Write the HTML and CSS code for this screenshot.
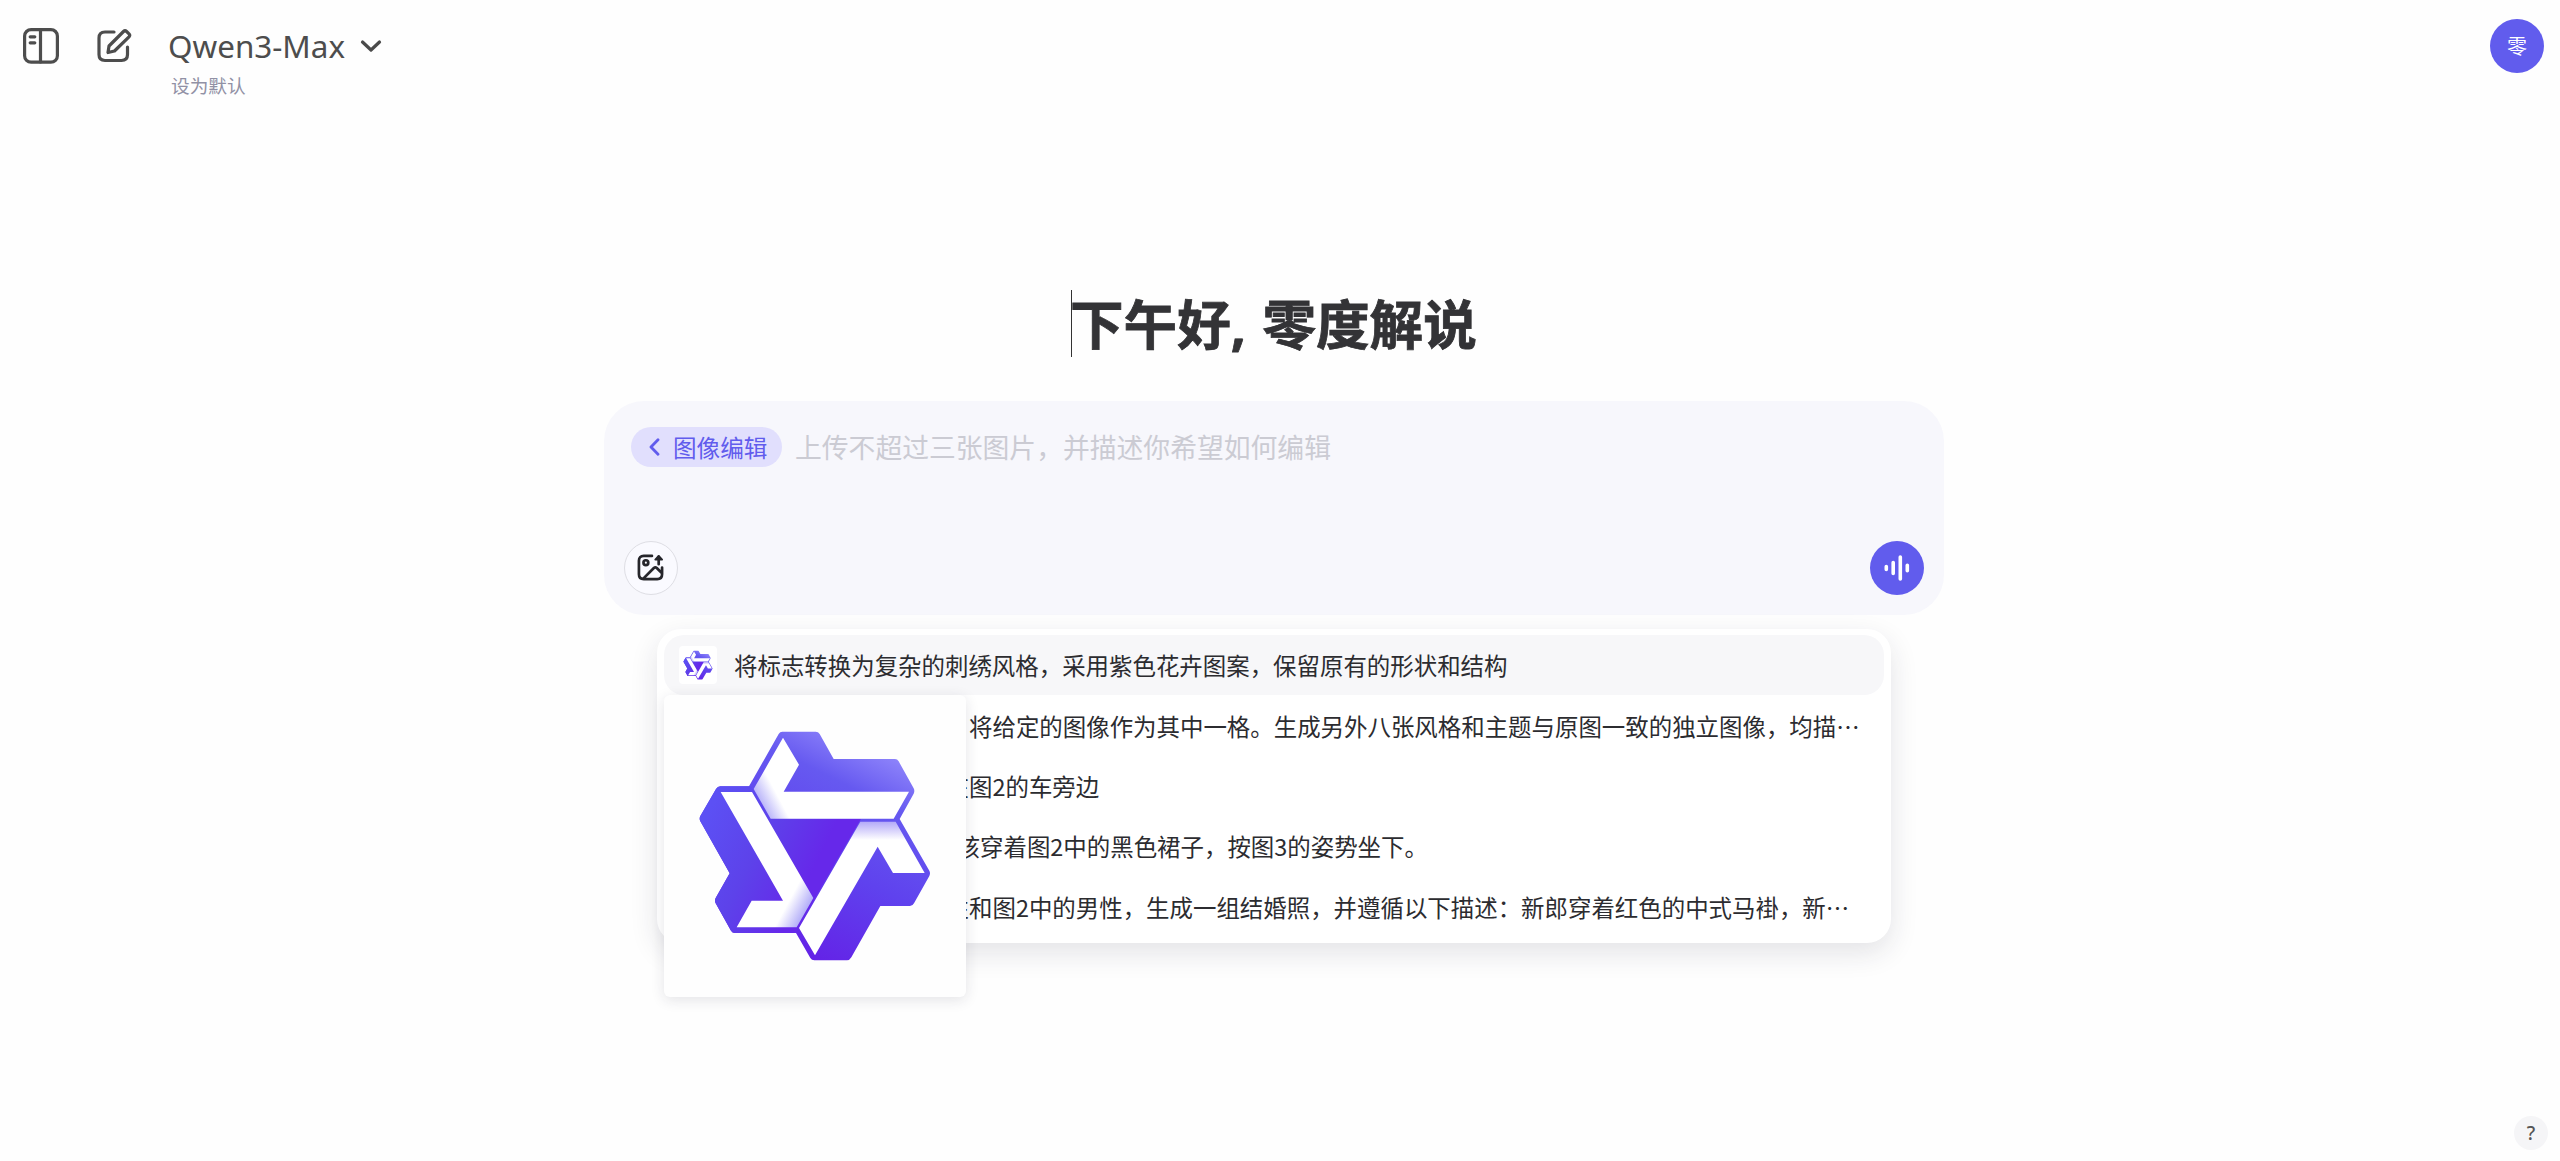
FILE: index.html
```html
<!DOCTYPE html>
<html lang="zh-CN">
<head>
<meta charset="utf-8">
<title>Qwen Chat</title>
<link rel="stylesheet" href="styles.css">
</head>
<body>
<svg class="defs" aria-hidden="true">
  <defs>
    <linearGradient id="base" gradientUnits="userSpaceOnUse" x1="740" y1="210" x2="440" y2="810">
      <stop offset="0" stop-color="#8c82fa"/><stop offset=".2" stop-color="#6659f0"/><stop offset=".55" stop-color="#5f42ee"/><stop offset="1" stop-color="#6420e6"/>
    </linearGradient>
    <linearGradient id="left" gradientUnits="userSpaceOnUse" x1="160" y1="400" x2="480" y2="560">
      <stop offset="0" stop-color="#5c50f4"/><stop offset=".5" stop-color="#5d42ea"/><stop offset="1" stop-color="#6628ea"/>
    </linearGradient>
    <linearGradient id="fadeA" gradientUnits="userSpaceOnUse" x1="325" y1="350" x2="385" y2="318">
      <stop offset="0" stop-color="#a9a3f8"/><stop offset="1" stop-color="#fff"/>
    </linearGradient>
    <linearGradient id="fadeB" gradientUnits="userSpaceOnUse" x1="680" y1="395" x2="680" y2="450">
      <stop offset="0" stop-color="#b3a9f8"/><stop offset="1" stop-color="#fff"/>
    </linearGradient>
    <linearGradient id="fadeC" gradientUnits="userSpaceOnUse" x1="474" y1="670" x2="415" y2="638">
      <stop offset="0" stop-color="#a9a3f8"/><stop offset="1" stop-color="#fff"/>
    </linearGradient>
    <symbol id="logo" viewBox="43 15 903 903">
      <path fill="url(#base)" d="M398 125H498Q506 125 510 132L552 207H736Q743 207 747 214L792 295Q796 303 792 311L750 387L839 542Q843 550 839 558L793 640Q789 648 781 648H692L605 802Q600 811 592 811H494Q486 811 482 804L439 729H256Q248 729 244 722L198 640Q194 632 198 624L240 550L152 394Q148 386 152 378L199 297Q204 289 212 289H298L387 132Q391 125 398 125Z"/>
      <path fill="url(#left)" d="M212 289H305L360 387H634L444 713L439 729H256Q248 729 244 722L198 640Q194 632 198 624L240 550L152 394Q148 386 152 378L199 297Q204 289 212 289Z"/>
      <path fill="url(#fadeA)" d="M400 143L448 224L402 305H778L732 386H363L312 297Z"/>
      <path fill="url(#fadeB)" d="M632 395H738L825 549H730L684 470L496 796L448 714Z"/>
      <path fill="url(#fadeC)" d="M213 306H307L491 624L441 712H261L306 632H400Z"/>
    </symbol>
  </defs>
</svg>

<header class="topbar">
  <button class="icon-btn" aria-label="侧边栏">
    <svg class="icon-side" viewBox="0 0 36 36"><rect x="1.6" y="1.6" width="32.8" height="32.6" rx="6.5"/><path d="M17.500 2v32M7.200 8.800h4.600M7.200 14.800h4.600"/></svg>
  </button>
  <button class="icon-btn edit" aria-label="新建对话">
    <svg class="icon-edit" viewBox="0 0 36 36"><path d="M17 4H8Q2 4 2 10V26.500Q2 32.500 8 32.500H24.500Q30.500 32.500 30.500 26.500V19M11 24.500L12 18L26.500 3.500Q28 2 29.600 3.500L32 5.800Q33.400 7.300 32 8.800L17.500 23Z"/></svg>
  </button>
  <div class="model">
    <div class="model-row">
      <span class="model-name">Qwen3-Max</span>
      <svg class="chevron" viewBox="0 0 22 14"><path d="M2.500 3L11 11L19.500 3"/></svg>
    </div>
    <span class="model-default">设为默认</span>
  </div>
  <div class="avatar">零</div>
</header>

<main class="content">
  <h1 class="greeting"><span class="caret"></span>下午好<span class="comma">, </span>零度解说</h1>
  <section class="composer">
    <div class="prompt">
      <span class="tag"><svg class="back" viewBox="0 0 12 18"><path d="M10 1.800L3 9L10 16.200"/></svg>图像编辑</span>
      <span class="placeholder">上传不超过三张图片，并描述你希望如何编辑</span>
    </div>
    <div class="actions">
      <button class="upload" aria-label="上传图片">
        <svg viewBox="0 0 28 28"><path d="M15.500 2H7Q2 2 2 7V21Q2 26 7 26H21Q26 26 26 21V14M6.500 25.500L17.500 14.500Q19 13.200 20.500 14.500L26 20M22.500 10.500V3"/><path class="solid" d="M19 5.800L22.500 2L26 5.800Z"/><circle cx="9.200" cy="9" r="2.500"/></svg>
      </button>
      <button class="voice" aria-label="语音">
        <svg viewBox="0 0 28 28"><path d="M3.300 12.500V15.500M10.200 8.500V19.500M17.300 3V25M24.300 11.200V16.800"/></svg>
      </button>
    </div>
  </section>

  <section class="suggestions">
    <div class="row active"><span class="thumb"><svg><use href="#logo"/></svg></span><span class="text">将标志转换为复杂的刺绣风格，采用紫色花卉图案，保留原有的形状和结构</span></div>
    <div class="row"><span class="thumb"></span><span class="text"><span class="lead">生成一张九宫格图片，</span>将给定的图像作为其中一格。生成另外八张风格和主题与原图一致的独立图像，均描…</span></div>
    <div class="row"><span class="thumb"></span><span class="text"><span class="lead">让图1中的人物站在</span>图2的车旁边</span></div>
    <div class="row"><span class="thumb"></span><span class="text"><span class="lead long">让图1中的这个女孩</span>穿着图2中的黑色裙子，按图3的姿势坐下。</span></div>
    <div class="row"><span class="thumb"></span><span class="text"><span class="lead">根据图1中的女性</span>和图2中的男性，生成一组结婚照，并遵循以下描述：新郎穿着红色的中式马褂，新…</span></div>
    <div class="preview"><svg><use href="#logo"/></svg></div>
  </section>
</main>
<button class="help" aria-label="帮助">?</button>
</body>
</html>
```
FILE: styles.css
```css
* { box-sizing: border-box; }
body {
  margin: 0;
  height: 1161px;
  overflow: hidden;
  background: #fefefe;
  color: #2c2c30;
  font-family: "Noto Sans CJK SC", sans-serif;
}
button { border: 0; padding: 0; background: none; font: inherit; }
svg { display: block; }
.defs { position: absolute; width: 0; height: 0; }

.topbar { display: flex; align-items: flex-start; height: 120px; padding: 20px 16px 0 23px; }
.icon-btn { display: block; margin-top: 8px; width: 36px; height: 36px; }
.icon-btn.edit { margin: 8px 0 0 38px; }
.icon-btn svg { width: 36px; height: 36px; fill: none; stroke: #4d4d4d; stroke-width: 3.2; stroke-linecap: round; stroke-linejoin: round; }
.model { margin-left: 35px; }
.model-row { display: flex; align-items: center; height: 52px; gap: 16px; }
.model-name { font: 31.4px/52px "Noto Sans", sans-serif; color: #4d4d4d; width: 176px; white-space: nowrap; }
.chevron { width: 22px; height: 14px; fill: none; stroke: #4a4a4a; stroke-width: 3.2; stroke-linecap: round; stroke-linejoin: round; }
.model-default { display: block; margin-left: 3px; font-size: 18.67px; line-height: 26px; color: #9191a5; }
.avatar { margin-left: auto; margin-top: -1px; width: 54px; height: 54px; border-radius: 50%; background: #615ced; color: #fff; font-size: 20px; line-height: 54px; text-align: center; }

.content { width: 1340px; margin-left: 604px; }
.greeting { position: relative; margin: 162px 0 0; padding-left: 466px; height: 80px; font-size: 53.6px; line-height: 80px; font-weight: 700; color: #333336; white-space: nowrap; -webkit-text-stroke: .8px #333336; }
.comma { font-family: "Noto Sans", sans-serif; letter-spacing: 1.2px; }
.caret { position: absolute; left: 467px; top: 8px; width: 1px; height: 67px; background: #333; }
.composer { display: flex; flex-direction: column; justify-content: space-between; margin-top: 39px; height: 214px; padding: 26px 20px 20px; border-radius: 40px; background: #f7f7fc; }
.prompt { display: flex; align-items: center; gap: 13px; padding-left: 7px; height: 40px; }
.tag { display: flex; align-items: center; gap: 13px; width: 151px; height: 40px; padding-left: 17px; border-radius: 20px; background: #e1dffd; color: #615ced; font-size: 23.6px; line-height: 38px; }
.back { width: 12px; height: 18px; fill: none; stroke: #615ced; stroke-width: 2.8; stroke-linecap: round; stroke-linejoin: round; }
.placeholder { font-size: 26.8px; line-height: 40px; color: #cbcbd3; }
.actions { display: flex; justify-content: space-between; }
.upload, .voice { display: flex; align-items: center; justify-content: center; width: 54px; height: 54px; border-radius: 50%; }
.upload { border: 1.5px solid #dedee4; background: #fafaff; }
.upload svg { width: 27px; height: 27px; margin: -1px 0 0 -1px; fill: none; stroke: #26262b; stroke-width: 2.8; stroke-linecap: round; stroke-linejoin: round; }
.upload .solid { fill: #26262b; stroke-width: 2; }
.voice { background: #615ced; }
.voice svg { width: 28px; height: 28px; fill: none; stroke: #fff; stroke-width: 3.6; stroke-linecap: round; }

.suggestions { position: relative; margin: 14px 53px 0; height: 314px; padding: 6px 7px; border-radius: 24px; background: #fff; box-shadow: 0 10px 28px rgba(30, 30, 60, .12); }
.row { display: flex; align-items: center; height: 60.4px; padding-left: 15px; border-radius: 20px; }
.row.active { background: #f7f7f9; }
.thumb { width: 38px; height: 38px; border-radius: 4px; flex: none; }
.active .thumb { background: #fff; }
.thumb svg { width: 38px; height: 38px; }
.text { margin-left: 17px; font-size: 23.45px; line-height: 36px; white-space: nowrap; }
.lead { display: inline-flex; justify-content: flex-end; width: 235px; }
.lead.long { width: 246px; }
.preview { position: absolute; left: 7px; top: 66px; width: 302px; height: 302px; border-radius: 6px; background: #fefefe; box-shadow: 0 3px 14px rgba(30, 30, 60, .12); }
.preview svg { width: 301px; height: 301px; }
.help { position: absolute; left: 2514px; top: 1116px; width: 34px; height: 34px; border-radius: 50%; background: #f5f5f7; color: #555; font: 500 19px/34px "Noto Sans", sans-serif; text-align: center; }
```
